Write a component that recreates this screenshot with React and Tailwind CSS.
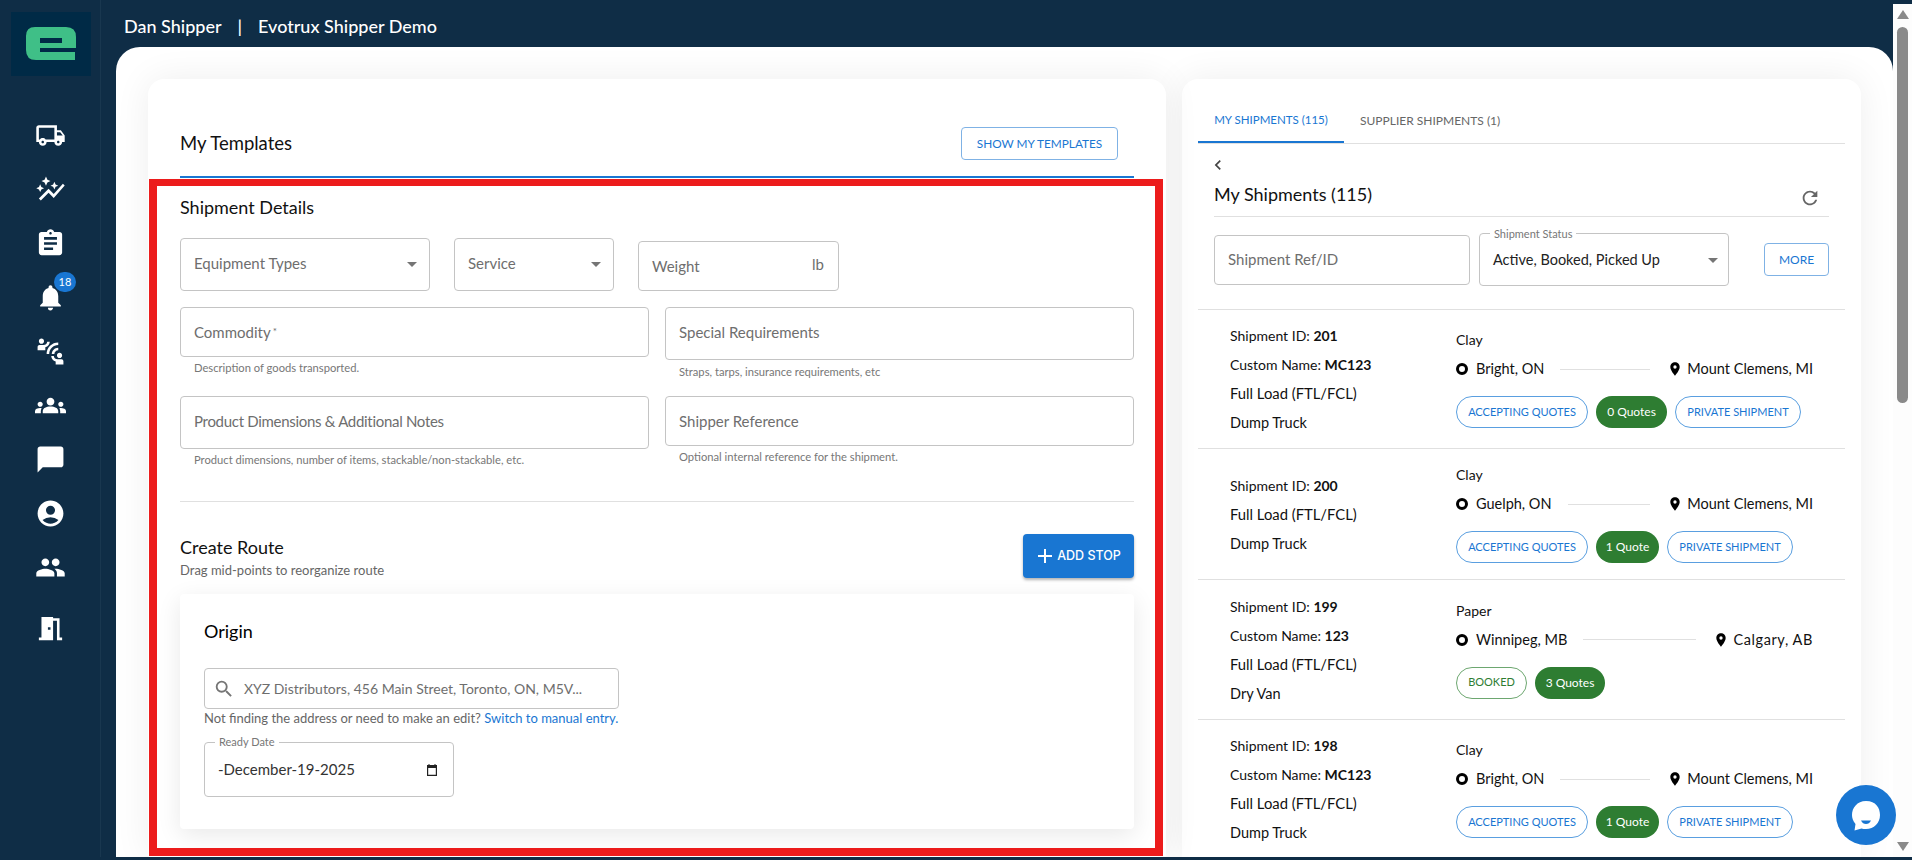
import {
  MdOutlineLocalShipping,
  MdAutoGraph,
  MdAssignment,
  MdNotifications,
  MdConnectWithoutContact,
  MdGroups,
  MdChatBubble,
  MdAccountCircle,
  MdPeople,
  MdMeetingRoom,
  MdArrowDropDown,
  MdSearch,
  MdAdd,
  MdRefresh,
  MdChevronLeft,
  MdPlace,
} from 'react-icons/md';

const font = "font-['Lato','Noto_Sans',sans-serif]";

const navIcons = [
  MdOutlineLocalShipping,
  MdAutoGraph,
  MdAssignment,
  MdNotifications,
  MdConnectWithoutContact,
  MdGroups,
  MdChatBubble,
  MdAccountCircle,
  MdPeople,
];

const shipments = [
  {
    id: '201',
    customName: 'MC123',
    load: 'Full Load (FTL/FCL)',
    truck: 'Dump Truck',
    commodity: 'Clay',
    from: 'Bright, ON',
    to: 'Mount Clemens, MI',
    rowClass: 'h-[139px]',
    status: 'ACCEPTING QUOTES',
    quotes: '0 Quotes',
    quotesClass: 'w-[71px]',
    isPrivate: true,
  },
  {
    id: '200',
    load: 'Full Load (FTL/FCL)',
    truck: 'Dump Truck',
    commodity: 'Clay',
    from: 'Guelph, ON',
    to: 'Mount Clemens, MI',
    rowClass: 'h-[131px]',
    status: 'ACCEPTING QUOTES',
    quotes: '1 Quote',
    quotesClass: 'w-[63px]',
    isPrivate: true,
  },
  {
    id: '199',
    customName: '123',
    load: 'Full Load (FTL/FCL)',
    truck: 'Dry Van',
    commodity: 'Paper',
    from: 'Winnipeg, MB',
    to: 'Calgary, AB',
    toClass: 'tracking-[0.6px]',
    rowClass: 'h-[140px]',
    status: 'BOOKED',
    quotes: '3 Quotes',
    quotesClass: 'w-[70px]',
  },
  {
    id: '198',
    customName: 'MC123',
    load: 'Full Load (FTL/FCL)',
    truck: 'Dump Truck',
    commodity: 'Clay',
    from: 'Bright, ON',
    to: 'Mount Clemens, MI',
    rowClass: 'h-[139px]',
    status: 'ACCEPTING QUOTES',
    quotes: '1 Quote',
    quotesClass: 'w-[63px]',
    isPrivate: true,
  },
];

function Logo() {
  return (
    <svg viewBox="11 12 80 64" className="ml-[11px] mt-[12px] h-[64px] w-[80px] bg-[#002a46]">
      <path
        fill="#3fbf87"
        fillRule="evenodd"
        d="M35 27H66Q76 27 76 37V48H40V52H75V60H36Q26 60 26 50V36Q26 27 35 27ZM40 38V43H62V38Z"
      />
    </svg>
  );
}

function Sidebar() {
  return (
    <aside className="w-[101px] shrink-0 border-r border-[#19374f]">
      <Logo />
      <nav className="mt-[32px] flex flex-col items-center text-white">
        {navIcons.map((Icon, i) => (
          <div key={i} className="relative flex h-[54px] w-full items-center justify-center">
            <Icon size={31} />
            {i === 3 && (
              <span className="absolute left-[54px] top-[2px] flex h-[20px] w-[22px] items-center justify-center rounded-full bg-[#1976d2] text-[11px] text-white">
                18
              </span>
            )}
          </div>
        ))}
        <div className="mt-[7px] flex h-[54px] w-full items-center justify-center">
          <MdMeetingRoom size={31} />
        </div>
      </nav>
    </aside>
  );
}

function Field({ label, className = '', helper, arrow, suffix, helperClass = 'mt-[3px]' }) {
  return (
    <div>
      <div
        className={`flex items-center justify-between rounded-[4px] border border-[#c4c4c4] pl-[13px] pr-[9px] text-[15px] text-[#6e6e6e] ${className}`}
      >
        <span>{label}</span>
        {arrow && <MdArrowDropDown size={24} className="-mr-[4px] text-[#757575]" />}
        {suffix && <span className="mr-[5px] -mt-[4px]">{suffix}</span>}
      </div>
      {helper && (
        <p className={`${helperClass} h-[16px] pl-[14px] text-[11.2px] leading-[16px] text-[#777]`}>
          {helper}
        </p>
      )}
    </div>
  );
}

function CalendarIcon() {
  return (
    <svg viewBox="0 0 12 12" className="h-[12px] w-[12px]">
      <path
        fill="#222"
        fillRule="evenodd"
        d="M2.5 0H3.5V1H8.5V0H9.5V1H11V12H1V1H2.5ZM2.2 4V10.8H9.8V4Z"
      />
    </svg>
  );
}

function LeftCard() {
  return (
    <section className="relative w-[1018px] shrink-0 rounded-t-[16px] bg-white px-[32px] shadow-[0_0_36px_rgba(0,0,0,0.07)]">
      {/* Templates */}
      <div className="flex h-[99px] items-end justify-between border-b-2 border-[#1976d2] pb-[16px]">
        <h2 className="mb-[5px] text-[18.5px] leading-[24px] text-[#111]">My Templates</h2>
        <button className="mr-[16px] h-[33px] w-[157px] rounded-[4px] border border-[#7fb2e5] text-[11.8px] text-[#1976d2]">
          SHOW MY TEMPLATES
        </button>
      </div>

      {/* Shipment Details */}
      <h3 className="mt-[17px] text-[18px] leading-[24px] text-[#111]">Shipment Details</h3>
      <div className="mt-[19px] flex items-end gap-[24px]">
        <div className="w-[250px]">
          <Field label="Equipment Types" arrow className="h-[53px] pb-[2px]" />
        </div>
        <div className="w-[160px]">
          <Field label="Service" arrow className="h-[53px] pb-[2px]" />
        </div>
        <div className="w-[201px]">
          <Field label="Weight" suffix="lb" className="h-[50px]" />
        </div>
      </div>
      <div className="mt-[16px] grid grid-cols-2 gap-x-[16px] gap-y-[16px]">
        <Field
          label={
            <>
              Commodity<span className="ml-[2px] align-[3px] text-[10px]">*</span>
            </>
          }
          className="h-[50px]"
          helper="Description of goods transported."
        />
        <Field
          label="Special Requirements"
          className="h-[53px] pb-[2px]"
          helperClass="mt-[4px]"
          helper="Straps, tarps, insurance requirements, etc"
        />
        <Field
          label={<span className="tracking-[-0.3px]">Product Dimensions &amp; Additional Notes</span>}
          className="h-[53px] pb-[2px]"
          helper="Product dimensions, number of items, stackable/non-stackable, etc."
        />
        <Field
          label="Shipper Reference"
          className="h-[50px]"
          helper="Optional internal reference for the shipment."
        />
      </div>
      <hr className="mt-[33px] border-[#e0e0e0]" />

      {/* Create Route */}
      <div className="mt-[32px] flex items-start justify-between">
        <div className="pt-[1px]">
          <h3 className="text-[18px] leading-[24px] text-[#111]">Create Route</h3>
          <p className="mt-[3px] text-[13px] leading-[16px] text-[#666]">
            Drag mid-points to reorganize route
          </p>
        </div>
        <button className="flex h-[44px] w-[111px] items-center justify-center rounded-[4px] bg-[#1976d2] pr-[3px] font-['Inter',sans-serif] text-[12.5px] font-medium text-white shadow-[0_2px_3px_rgba(0,0,0,0.3)]">
          <MdAdd size={24} />
          ADD STOP
        </button>
      </div>

      {/* Origin */}
      <div className="mt-[16px] rounded-[4px] bg-white px-[24px] pb-[32px] pt-[25px] shadow-[0_6px_24px_rgba(0,0,0,0.09)]">
        <h3 className="text-[18px] leading-[24px] text-black">Origin</h3>
        <div className="mt-[25px] flex h-[41px] w-[415px] items-center rounded-[4px] border border-[#c4c4c4] pl-[8px] text-[14px] text-[#6e6e6e]">
          <MdSearch size={22} className="text-[#757575]" />
          <span className="ml-[9px]">XYZ Distributors, 456 Main Street, Toronto, ON, M5V...</span>
        </div>
        <p className="mt-[1px] h-[16px] text-[13px] leading-[16px] text-[#666]">
          Not finding the address or need to make an edit?{' '}
          <a className="text-[#1976d2]">Switch to manual entry.</a>
        </p>
        <div className="relative mt-[16px] flex h-[55px] w-[250px] items-center justify-between rounded-[4px] border border-[#c4c4c4] pl-[13px] pr-[15px] text-[15px] text-[#333]">
          <span className="absolute -top-[8px] left-[10px] bg-white px-[4px] text-[11px] leading-[14px] text-[#777]">
            Ready Date
          </span>
          <span>-December-19-2025</span>
          <CalendarIcon />
        </div>
      </div>

      {/* Highlight around the form */}
      <div className="pointer-events-none absolute left-[1px] top-[100px] h-[677px] w-[1014px] border-[8px] border-t-[7px] border-[#ec1c1c]" />
    </section>
  );
}

function Pill({ children, className }) {
  return (
    <span className={`flex h-[32px] items-center justify-center rounded-full ${className}`}>
      {children}
    </span>
  );
}

function ShipmentRow({ shipment }) {
  const booked = shipment.status === 'BOOKED';
  return (
    <div className={`flex items-center border-t border-[#e0e0e0] ${shipment.rowClass}`}>
      <div className="w-[258px] pl-[32px] text-[14px] leading-[29px] text-[#111]">
        <div>
          Shipment ID: <b>{shipment.id}</b>
        </div>
        {shipment.customName && (
          <div>
            Custom Name: <b>{shipment.customName}</b>
          </div>
        )}
        <div className="text-[14.8px]">{shipment.load}</div>
        <div className="text-[14.5px]">{shipment.truck}</div>
      </div>
      <div className="w-[357px] text-[14px] text-[#111]">
        <div className="h-[20px] leading-[20px]">{shipment.commodity}</div>
        <div className="mt-[9px] flex h-[20px] items-center text-[14.5px]">
          <span className="h-[12px] w-[12px] rounded-full border-[3px] border-black" />
          <span className="ml-[8px]">{shipment.from}</span>
          <span className="ml-[16px] mr-[17px] h-px flex-1 bg-[#e0e0e0]" />
          <MdPlace size={16} className="text-black" />
          <span className={`ml-[4px] ${shipment.toClass ?? ''}`}>{shipment.to}</span>
        </div>
        <div className="mt-[17px] flex gap-[8px]">
          {booked ? (
            <Pill className="w-[71px] border border-[#6da770] text-[11px] text-[#2e7d32]">
              {shipment.status}
            </Pill>
          ) : (
            <Pill className="w-[132px] border border-[#5a9fe0] text-[11px] text-[#1976d2]">
              {shipment.status}
            </Pill>
          )}
          <Pill className={`bg-[#2e7d32] text-[12px] text-white ${shipment.quotesClass}`}>
            {shipment.quotes}
          </Pill>
          {shipment.isPrivate && (
            <Pill className="w-[126px] border border-[#5a9fe0] text-[11px] text-[#1976d2]">
              PRIVATE SHIPMENT
            </Pill>
          )}
        </div>
      </div>
    </div>
  );
}

function RightCard() {
  return (
    <section className="w-[679px] shrink-0 rounded-t-[16px] bg-white px-[16px] shadow-[0_0_36px_rgba(0,0,0,0.07)]">
      <div className="mt-[19px] flex h-[46px] border-b border-[#e0e0e0]">
        <div className="flex h-[45px] w-[146px] items-center justify-center border-b-2 border-[#1976d2] text-[11.5px] text-[#1976d2]">
          MY SHIPMENTS (115)
        </div>
        <div className="flex h-[45px] items-center px-[16px] text-[12px] text-[#666]">
          SUPPLIER SHIPMENTS (1)
        </div>
      </div>

      <div className="mx-[16px]">
        <MdChevronLeft size={20} className="-ml-[6px] mt-[11px] text-[#444]" />
        <div className="mt-[7px] flex h-[35px] justify-between border-b border-[#e0e0e0]">
          <h2 className="text-[18px] leading-[24px] text-[#111]">My Shipments (115)</h2>
          <MdRefresh size={22} className="mr-[8px] mt-[5px] text-[#666]" />
        </div>
        <div className="mt-[16px] flex h-[53px] items-center">
          <div className="flex h-[50px] w-[256px] items-center rounded-[4px] border border-[#c4c4c4] pl-[13px] text-[15px] text-[#6e6e6e]">
            Shipment Ref/ID
          </div>
          <div className="relative ml-[9px] flex h-[53px] w-[250px] items-center justify-between rounded-[4px] border border-[#c4c4c4] pl-[13px] pr-[3px] text-[14.5px] text-[#222]">
            <span className="absolute -top-[7px] left-[10px] bg-white px-[4px] text-[11px] leading-[14px] text-[#777]">
              Shipment Status
            </span>
            <span>Active, Booked, Picked Up</span>
            <MdArrowDropDown size={24} className="text-[#757575]" />
          </div>
          <button className="ml-auto h-[33px] w-[65px] rounded-[4px] border border-[#7fb2e5] text-[12px] text-[#1976d2]">
            MORE
          </button>
        </div>
      </div>

      <div className="mt-[23px]">
        {shipments.map((shipment) => (
          <ShipmentRow key={shipment.id} shipment={shipment} />
        ))}
      </div>
    </section>
  );
}

function Scrollbar() {
  return (
    <div className="relative mt-[4px] flex w-[19px] shrink-0 flex-col items-center bg-[#fdfdfd] pt-[6px]">
      <span className="h-0 w-0 border-x-[6px] border-b-[9px] border-x-transparent border-b-[#8a8a8a]" />
      <span className="mt-[8px] h-[376px] w-[11px] rounded-full bg-[#8a8a8a]" />
      <span className="mt-auto mb-[6px] h-0 w-0 border-x-[6px] border-t-[9px] border-x-transparent border-t-[#8a8a8a]" />
    </div>
  );
}

function ChatWidget() {
  return (
    <div className="absolute bottom-[15px] right-[16px] flex h-[60px] w-[60px] items-center justify-center rounded-full bg-[#1976d2]">
      <svg viewBox="0 0 60 60" className="h-[60px] w-[60px]">
        <path
          fill="#fff"
          d="M30 16C40 16 44 23 44 30C44 38 38 44 30 44C28 44 27 44 25.500 43.500L18.500 45.500L19.500 39C17 36 16 33 16 30C16 23 21 16 30 16Z"
        />
        <path fill="#1976d2" d="M25 35.500H35C34 38 32 39 30 39C28 39 26 38 25 35.500Z" />
      </svg>
    </div>
  );
}

export default function App() {
  return (
    <div className={`relative h-[860px] w-[1912px] overflow-hidden bg-[#0f2d46] ${font}`}>
      <div className="flex h-[857px]">
        <Sidebar />
        <div className="flex min-w-0 flex-1 flex-col">
          <header className="flex h-[47px] shrink-0 items-center pl-[23px] pt-[5px] text-[18px] font-medium text-white">
            <span>Dan Shipper</span>
            <span className="mx-[16px]">|</span>
            <span>Evotrux Shipper Demo</span>
          </header>
          <main className="ml-[15px] flex min-h-0 flex-1 gap-[16px] overflow-hidden rounded-t-[24px] bg-white pl-[32px] pt-[32px]">
            <LeftCard />
            <RightCard />
          </main>
        </div>
        <Scrollbar />
      </div>
      <ChatWidget />
    </div>
  );
}
